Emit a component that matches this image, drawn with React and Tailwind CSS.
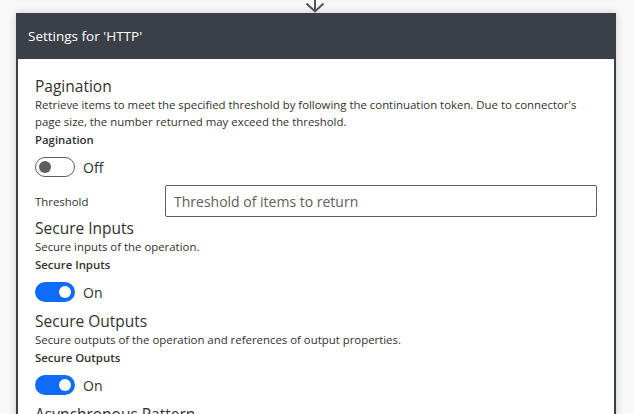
export default function App() {
  const font = { fontFamily: '"Open Sans", "Noto Sans", sans-serif' }

  function Toggle({ on, label }) {
    return (
      <div className="flex items-center h-[20px]">
        {on ? (
          <div className="w-[40px] h-[20px] rounded-full bg-[#0f6cfa] flex items-center justify-end pr-[4px]">
            <div className="w-[12px] h-[12px] rounded-full bg-white" />
          </div>
        ) : (
          <div className="w-[40px] h-[20px] rounded-full border border-[#605e5c] bg-white flex items-center pl-[3px]">
            <div className="w-[12px] h-[12px] rounded-full bg-[#605e5c]" />
          </div>
        )}
        <span className="ml-[8px] text-[14px] text-[#323130]">{label}</span>
      </div>
    )
  }

  function Section({ title, desc, label, on, children }) {
    return (
      <div>
        <div className="text-[15.5px] leading-[20px] text-[#323130]">{title}</div>
        <div className="text-[11.4px] leading-[17px] text-[#323130]">{desc}</div>
        <div className="text-[11.4px] leading-[17px] font-semibold text-[#323130] mt-[1px]">{label}</div>
        <div className="mt-[9px]">
          <Toggle on={on} label={on ? 'On' : 'Off'} />
        </div>
        {children}
      </div>
    )
  }

  return (
    <div className="w-[634px] h-[414px] overflow-hidden bg-[#f8f8f8] relative" style={font}>
      {/* connector arrow from previous step */}
      <svg className="absolute left-[305px] top-0" width="20" height="13" viewBox="0 0 20 13">
        <path d="M10 0 V11.5 M1.5 3.5 L10 11.5 L18.5 3.5" fill="none" stroke="#555555" strokeWidth="2" />
      </svg>

      <div className="ml-[16px] mt-[13px] w-[600px] shadow-[0_0_8px_rgba(0,0,0,0.18)]">
        <div className="h-[46px] bg-[#3b4048] flex items-center pl-[12px] text-white text-[13.5px]">
          Settings for 'HTTP'
        </div>
        <div className="bg-white border-x-2 border-[#3b4048] h-[400px] pl-[17px] pr-[14px] pt-[17px]">
          <Section
            title="Pagination"
            desc="Retrieve items to meet the specified threshold by following the continuation token. Due to connector's page size, the number returned may exceed the threshold."
            label="Pagination"
            on={false}
          >
            <div className="flex items-center mt-[8px]">
              <div className="w-[130px] text-[11.4px] text-[#323130] pt-[2px]">Threshold</div>
              <div className="w-[432px] h-[32px] border border-[#605e5c] rounded-[2px] flex items-center px-[8px] text-[14px] text-[#605e5c]">
                Threshold of items to return
              </div>
            </div>
          </Section>
          <div className="mt-[1px]">
            <Section
              title="Secure Inputs"
              desc="Secure inputs of the operation."
              label="Secure Inputs"
              on={true}
            />
          </div>
          <div className="mt-[9px]">
            <Section
              title="Secure Outputs"
              desc="Secure outputs of the operation and references of output properties."
              label="Secure Outputs"
              on={true}
            />
          </div>
          <div className="mt-[9px] text-[15.5px] leading-[20px] text-[#323130]">Asynchronous Pattern</div>
        </div>
      </div>
    </div>
  )
}
